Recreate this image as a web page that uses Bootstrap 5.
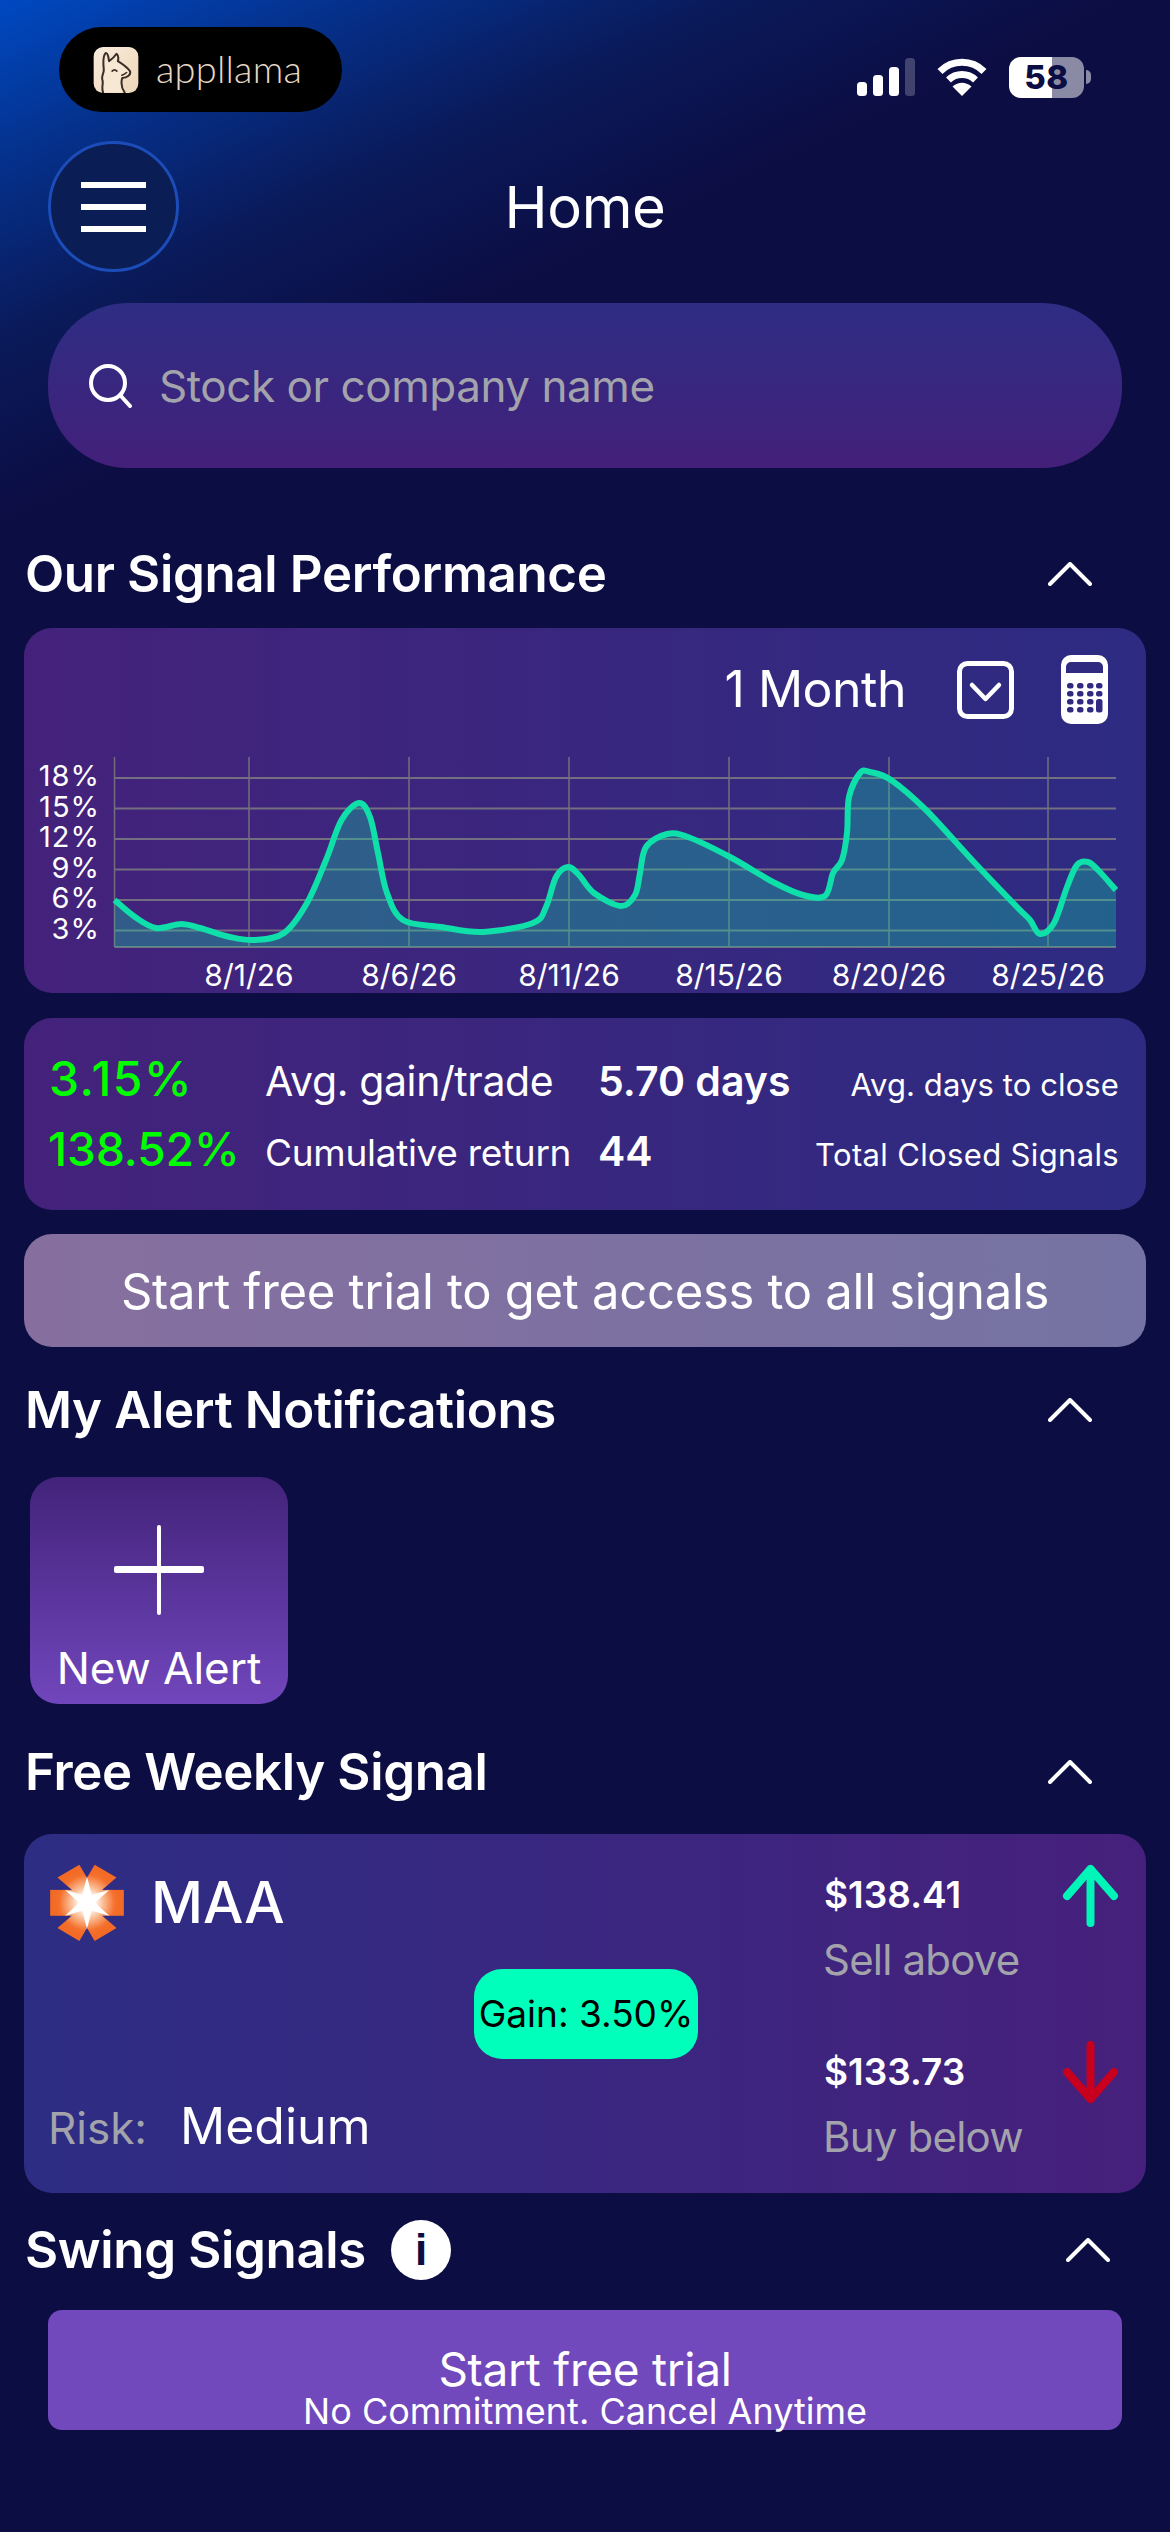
<!DOCTYPE html>
<html lang="en">
<head>
  <meta charset="UTF-8">
  <meta name="viewport" content="width=device-width, initial-scale=1.0">
  <title>Home</title>
  <link href="https://cdn.jsdelivr.net/npm/bootstrap@5.3.0/dist/css/bootstrap.min.css" rel="stylesheet">
  <style>
    body {
      margin: 0;
      min-height: 2532px;
      background: linear-gradient(155deg, #0049c2 0, #05308a 5.5%, #0a1a5a 11%, #0c0d43 17%);
      font-family: "Inter", "Liberation Sans", sans-serif;
      color: #fff;
    }

    .status-row { padding: 27px 79px 0 59px; }
    .brand-pill { width: 283px; height: 85px; background: #000; border-radius: 43px; padding-left: 34px; gap: 17px; }
    .brand-word { font-family: "Lato", sans-serif; font-weight: 300; font-size: 38px; line-height: 1; color: #e8d8c4; letter-spacing: .2px; margin-top: -4px; }
    .status-icons { margin-top: 15px; gap: 22px; }
    .battery-wrap { gap: 2px; }
    .battery-body { width: 75px; height: 41px; border-radius: 12px; color: #0c0d43; font-size: 33px; font-weight: 800; line-height: 41px; text-align: center; letter-spacing: .5px; }
    .battery-tip { width: 5px; height: 14px; background: #8b8aa5; border-radius: 0 7px 7px 0; }

    .top-bar { display: grid; grid-template-columns: 131px 1fr 131px; padding: 0 48px; margin-top: 29px; align-items: center; }
    .menu-btn { width: 131px; height: 131px; border-radius: 50%; background: #0a1e55; border: 3px solid #1b4cb8; gap: 16px; }
    .menu-btn i { display: block; width: 65px; height: 6px; background: #fff; }
    .page-title { font-size: 58px; font-weight: 400; line-height: 70px; margin: 0; letter-spacing: -.4px; }

    .search-box { height: 165px; margin: 31px 48px 0; padding-left: 41px; gap: 27px; border-radius: 80px; background: linear-gradient(180deg, #2e2d84, #43207a); }
    .search-hint { font-size: 44px; color: #a3a3ab; letter-spacing: -.45px; }

    .sec-head { height: 60px; padding: 0 78px 0 25px; }
    .head-perf { margin-top: 76px; }
    .head-alert { margin-top: 33px; }
    .head-free { margin-top: 38px; }
    .head-swing { margin-top: 27px; padding-right: 60px; }
    .sec-title { font-size: 51px; font-weight: 600; line-height: 60px; margin: 0; letter-spacing: -.35px; }

    .panel { margin: 0 24px; border: 0; border-radius: 28px; background: linear-gradient(90deg, #44227b, #2d2b82); color: #fff; }
    .chart-panel { height: 365px; margin-top: 24px; padding-top: 27px; }
    .range-row { height: 69px; padding-right: 38px; }
    .range-label { font-size: 50px; margin-right: 51px; letter-spacing: -.5px; }
    .range-caret { margin-right: 47px; }
    .chart-svg { display: block; margin-top: 26px; }
    .chart-svg text { font-family: "Inter", "Liberation Sans", sans-serif; font-size: 30px; fill: #fff; }
    .chart-svg .axis-y { font-size: 29px; letter-spacing: 1px; }

    .stat-panel { display: grid; grid-template-columns: 217px 333px 1fr; grid-auto-rows: 72px; height: 192px; margin-top: 25px; padding: 25px 27px 0 24px; align-items: baseline; }
    .stat-pct { font-size: 46px; font-weight: 500; color: #0f0; white-space: nowrap; }
    .stat-pct-lg { font-size: 48px; letter-spacing: 1.5px; margin-left: 1px; }
    .stat-name { font-size: 37px; letter-spacing: -.3px; white-space: nowrap; }
    .stat-name-lg { font-size: 41px; letter-spacing: -.4px; }
    .stat-val { font-size: 41px; font-weight: 600; }
    .stat-note { font-size: 31px; text-align: right; letter-spacing: .1px; white-space: nowrap; }
    .stat-note-wide { letter-spacing: .35px; }

    .trial-bar { height: 113px; margin-top: 24px; padding-top: 2px; background: linear-gradient(90deg, #866f9f, #7573a3); font-size: 49px; letter-spacing: -.3px; }

    .new-alert { width: 258px; height: 227px; margin: 37px 0 0 30px; border-radius: 28px; background: linear-gradient(180deg, #42237a, #7146bc); }
    .new-alert svg { margin-top: 48px; }
    .new-alert span { font-size: 44px; line-height: 50px; margin-top: 28px; }

    .signal-panel { display: grid; grid-template-columns: 450px 224px 1fr; height: 359px; margin-top: 32px; background: linear-gradient(90deg, #2d2d84, #46207c); }
    .signal-left { padding: 30px 0 35px 26px; }
    .ticker { font-size: 57px; font-weight: 500; line-height: 77px; gap: 27px; }
    .risk-line { font-size: 44px; line-height: 60px; color: #a3a3ab; gap: 33px; margin-left: -2px; }
    .risk-line b { font-weight: 400; font-size: 50px; color: #fff; }
    .gain-tag { height: 90px; background: #00ffbb; color: #000; border-radius: 28px; font-size: 37px; white-space: nowrap; }
    .signal-right { padding: 31px 27px 0 126px; gap: 52px; }
    .price-line { font-size: 37px; font-weight: 600; line-height: 60px; }
    .price-note { font-size: 42px; line-height: 60px; margin: 5px 0 0 -1px; color: #a3a3ab; letter-spacing: -.8px; }
    .signal-arrow { margin-top: -1px; }

    .info-dot { width: 60px; height: 60px; border-radius: 50%; background: #fff; color: #0c0d43; margin-left: 25px; font-family: "Liberation Sans", sans-serif; font-weight: 700; font-size: 44px; line-height: 60px; text-align: center; }
    .start-btn { display: flex; flex-direction: column; align-items: center; width: 1074px; height: 120px; margin: 30px 48px 0; padding: 36px 0 0; border: 0; border-radius: 14px; background: #7248bd; color: #fff; }
    .start-main { font-size: 46px; line-height: 46px; letter-spacing: -.3px; }
    .start-sub { font-size: 36px; line-height: 38px; }
  </style>
</head>
<body>

  <div class="status-row d-flex justify-content-between align-items-center">
    <div class="brand-pill d-flex align-items-center">
      <svg width="46" height="46" viewBox="0 0 133 137">
        <defs>
          <linearGradient id="iconBg" x1="0" y1="0" x2="1" y2="1"><stop offset="0" stop-color="#f9ecdc"/><stop offset="1" stop-color="#eed6b8"/></linearGradient>
        </defs>
        <rect width="133" height="137" rx="28" fill="url(#iconBg)"/>
        <path d="M28 135C22 120 30 110 26 98 22 85 32 78 30 65 28 45 28 25 36 18 44 18 44 35 46 42 52 38 60 32 68 20 74 25 74 35 72 42 85 50 100 60 108 72 112 82 100 92 85 92 80 110 85 125 92 135" fill="#f7e8d4" stroke="#3a2f27" stroke-width="6" stroke-linecap="round" stroke-linejoin="round"/>
        <path d="M55 72Q62 64 69 72M84 84Q92 82 98 76" fill="none" stroke="#3a2f27" stroke-width="5" stroke-linecap="round"/>
      </svg>
      <span class="brand-word">appllama</span>
    </div>
    <div class="status-icons d-flex align-items-center">
      <svg width="58" height="38" viewBox="0 0 58 38">
        <rect x="0" y="24" width="10" height="14" rx="3.5" fill="#fff"/>
        <rect x="16" y="17" width="10" height="21" rx="3.5" fill="#fff"/>
        <rect x="32" y="9" width="10" height="29" rx="3.5" fill="#fff"/>
        <rect x="48" y="0" width="10" height="38" rx="3.5" fill="#fff" fill-opacity=".22"/>
      </svg>
      <svg width="50" height="38" viewBox="0 0 50 38">
        <path d="M3 13.5A31 31 0 0 1 47 13.5M11.5 22A19.5 19.5 0 0 1 38.500 22" fill="none" stroke="#fff" stroke-width="7"/>
        <path d="M25 38 15.500 28.500Q25 21 34.500 28.500Z" fill="#fff"/>
      </svg>
      <div class="battery-wrap d-flex align-items-center">
        <div class="battery-body" style="background: linear-gradient(90deg, #fff 57.3%, #8b8aa5 57.3%)">58</div>
        <div class="battery-tip"></div>
      </div>
    </div>
  </div>

  <div class="top-bar">
    <button class="menu-btn d-flex flex-column justify-content-center align-items-center p-0" type="button" aria-label="Menu"><i></i><i></i><i></i></button>
    <h1 class="page-title text-center">Home</h1>
    <div></div>
  </div>

  <div class="search-box d-flex align-items-center">
    <svg width="43" height="44" viewBox="0 0 43 44" fill="none" stroke="#fff" stroke-width="4" stroke-linecap="round">
      <circle cx="19" cy="19" r="17"/><path d="M31 31 41 42"/>
    </svg>
    <span class="search-hint">Stock or company name</span>
  </div>

  <div class="sec-head head-perf d-flex justify-content-between align-items-center">
    <h2 class="sec-title">Our Signal Performance</h2>
    <svg width="44" height="24" viewBox="0 0 44 24" fill="none" stroke="#fff" stroke-width="4" stroke-linecap="round" stroke-linejoin="round"><path d="M2 22 22 2 42 22"/></svg>
  </div>

  <div class="panel chart-panel">
    <div class="range-row d-flex justify-content-end align-items-center">
      <span class="range-label">1 Month</span>
      <svg class="range-caret" width="57" height="58" viewBox="0 0 57 58" fill="none" stroke="#fff">
        <rect x="2.500" y="2.500" width="52" height="53" rx="8" stroke-width="5"/>
        <path d="M15 24 28.500 38 42 24" stroke-width="4.500" stroke-linecap="round" stroke-linejoin="round"/>
      </svg>
      <svg width="47" height="69" viewBox="0 0 47 69">
        <rect width="47" height="69" rx="10" fill="#fff"/>
        <path d="M5 18V12A5 5 0 0 1 10 7H37A5 5 0 0 1 42 12V18Z" fill="#302a80"/>
        <g fill="#302a80" id="calcKeys"></g>
        <rect x="35" y="44" width="6.500" height="13.500" rx="2.500" fill="#302a80"/>
      </svg>
    </div>
    <svg class="chart-svg" id="chart" width="1122" height="243" viewBox="24 750 1122 243"></svg>
  </div>

  <div class="panel stat-panel">
    <span class="stat-pct stat-pct-lg">3.15%</span>
    <span class="stat-name stat-name-lg">Avg. gain/trade</span>
    <div class="d-flex justify-content-between align-items-baseline">
      <span class="stat-val">5.70 days</span>
      <span class="stat-note">Avg. days to close</span>
    </div>
    <span class="stat-pct">138.52%</span>
    <span class="stat-name">Cumulative return</span>
    <div class="d-flex justify-content-between align-items-baseline">
      <span class="stat-val">44</span>
      <span class="stat-note stat-note-wide">Total Closed Signals</span>
    </div>
  </div>

  <div class="panel trial-bar d-flex justify-content-center align-items-center">Start free trial to get access to all signals</div>

  <div class="sec-head head-alert d-flex justify-content-between align-items-center">
    <h2 class="sec-title">My Alert Notifications</h2>
    <svg width="44" height="24" viewBox="0 0 44 24" fill="none" stroke="#fff" stroke-width="4" stroke-linecap="round" stroke-linejoin="round"><path d="M2 22 22 2 42 22"/></svg>
  </div>

  <div class="new-alert d-flex flex-column align-items-center">
    <svg width="90" height="90" viewBox="0 0 90 90" fill="#fff">
      <rect x="0" y="41" width="90" height="7" rx="2"/><rect x="43" y="0" width="4" height="90" rx="2"/>
    </svg>
    <span>New Alert</span>
  </div>

  <div class="sec-head head-free d-flex justify-content-between align-items-center">
    <h2 class="sec-title">Free Weekly Signal</h2>
    <svg width="44" height="24" viewBox="0 0 44 24" fill="none" stroke="#fff" stroke-width="4" stroke-linecap="round" stroke-linejoin="round"><path d="M2 22 22 2 42 22"/></svg>
  </div>

  <div class="panel signal-panel">
    <div class="signal-left d-flex flex-column justify-content-between">
      <div class="ticker d-flex align-items-center">
        <svg width="74" height="77" viewBox="60 72 222 232">
          <defs>
            <radialGradient id="maaGlow" gradientUnits="userSpaceOnUse" cx="171" cy="189" r="105">
              <stop offset=".2" stop-color="#fff"/><stop offset=".45" stop-color="#fbc29c"/><stop offset=".8" stop-color="#f4702c"/><stop offset="1" stop-color="#f26a24"/>
            </radialGradient>
          </defs>
          <g fill="url(#maaGlow)">
            <rect x="60" y="150" width="222" height="78"/>
            <path d="M82 113 148 74 170 112 171 189Z"/>
            <path d="M260 113 194 74 172 112 171 189Z"/>
            <path d="M82 265 148 304 170 266 171 189Z"/>
            <path d="M260 265 194 304 172 266 171 189Z"/>
          </g>
          <path d="M171 110 185 165 238 150 195 189 238 228 185 213 171 268 157 213 105 228 147 189 105 150 157 165Z" fill="#fff"/>
        </svg>
        <span>MAA</span>
      </div>
      <div class="risk-line d-flex align-items-baseline"><span>Risk:</span><b>Medium</b></div>
    </div>
    <div class="d-flex align-items-center">
      <div class="gain-tag w-100 d-flex justify-content-center align-items-center">Gain: 3.50%</div>
    </div>
    <div class="signal-right d-flex flex-column">
      <div class="d-flex justify-content-between align-items-start">
        <div>
          <div class="price-line">$138.41</div>
          <div class="price-note">Sell above</div>
        </div>
        <svg class="signal-arrow" width="57" height="63" viewBox="0 0 57 63" fill="none" stroke="#00f5b8" stroke-width="8" stroke-linecap="round" stroke-linejoin="round"><path d="M28.500 59V5M5 32 28.500 5 52 32"/></svg>
      </div>
      <div class="d-flex justify-content-between align-items-start">
        <div>
          <div class="price-line">$133.73</div>
          <div class="price-note">Buy below</div>
        </div>
        <svg class="signal-arrow" width="57" height="63" viewBox="0 0 57 63" fill="none" stroke="#c8001e" stroke-width="8" stroke-linecap="round" stroke-linejoin="round"><path d="M28.500 4V58M5 31 28.500 58 52 31"/></svg>
      </div>
    </div>
  </div>

  <div class="sec-head head-swing d-flex justify-content-between align-items-center">
    <div class="d-flex align-items-center">
      <h2 class="sec-title">Swing Signals</h2>
      <span class="info-dot">i</span>
    </div>
    <svg width="44" height="24" viewBox="0 0 44 24" fill="none" stroke="#fff" stroke-width="4" stroke-linecap="round" stroke-linejoin="round"><path d="M2 22 22 2 42 22"/></svg>
  </div>

  <button class="btn start-btn" type="button">
    <span class="start-main">Start free trial</span>
    <span class="start-sub">No Commitment. Cancel Anytime</span>
  </button>

  <script>
    // calculator keys, the tall key in the last column is drawn in the svg
    var keys = "";
    var keyX = [6, 16, 26, 35];
    for (var r = 0; r < 4; r++) {
      for (var c = 0; c < 4; c++) {
        if (c == 3 && r > 1) continue;
        keys += '<rect x="' + keyX[c] + '" y="' + (28 + r * 8) + '" width="6.500" height="5.500" rx="2.500"/>';
      }
    }
    document.getElementById("calcKeys").innerHTML = keys;

    // chart, points read off in page pixels
    var pts = [[114.5,900],[135,917],[156,928],[181,924],[200,928],[230,937],[255,940],[284,933],[307,903],[326,860],[341.5,820],[359,803],[370,817],[378,853],[387,893],[403,920],[441,927],[483,932],[533,923],[546,907],[556,877],[568,867],[579,875],[594,893],[621,906],[635,895],[640,873],[646,847],[667,834],[688,837],[730,857],[775,883],[803,895],[825,896],[833,873],[842,860],[847,833],[849,797],[860,773],[870,772],[891,780],[926,810],[972,860],[1017,907],[1030,920],[1040,934],[1054,923],[1067,887],[1077,865],[1088,862],[1098,870],[1116,890]];
    var d = "M" + pts[0][0] + " " + pts[0][1];
    for (var i = 0; i < pts.length - 1; i++) {
      var p0 = pts[i - 1] || pts[i], p1 = pts[i], p2 = pts[i + 1], p3 = pts[i + 2] || p2;
      d += "C" + (p1[0] + (p2[0] - p0[0]) / 6).toFixed(1) + " " + (p1[1] + (p2[1] - p0[1]) / 6).toFixed(1) + " " +
        (p2[0] - (p3[0] - p1[0]) / 6).toFixed(1) + " " + (p2[1] - (p3[1] - p1[1]) / 6).toFixed(1) + " " + p2[0] + " " + p2[1];
    }
    var html = "";
    var yLines = [[778,"18%"],[808.5,"15%"],[839,"12%"],[869.5,"9%"],[900,"6%"],[930.5,"3%"]];
    yLines.forEach(function (l) {
      html += '<line x1="114.500" x2="1116" y1="' + l[0] + '" y2="' + l[0] + '" stroke="#736f80" stroke-width="2"/>';
      html += '<text class="axis-y" x="100" y="' + (l[0] + 8) + '" text-anchor="end">' + l[1] + '</text>';
    });
    var xLines = [[249,"8/1/26"],[409,"8/6/26"],[569,"8/11/26"],[729,"8/15/26"],[889,"8/20/26"],[1048,"8/25/26"]];
    html += '<line x1="114.500" x2="114.500" y1="757" y2="947" stroke="#736f80" stroke-width="1.500"/>';
    html += '<line x1="114.500" x2="1116" y1="947" y2="947" stroke="#736f80" stroke-width="2"/>';
    xLines.forEach(function (l) {
      html += '<line x1="' + l[0] + '" x2="' + l[0] + '" y1="757" y2="947" stroke="#736f80" stroke-width="1.500"/>';
      html += '<text x="' + l[0] + '" y="986" text-anchor="middle">' + l[1] + '</text>';
    });
    html += '<path d="' + d + 'L1116 947L114.500 947Z" fill="#10d8a8" fill-opacity=".32"/>';
    html += '<path d="' + d + '" fill="none" stroke="#0fdfa8" stroke-width="6" stroke-linejoin="round"/>';
    document.getElementById("chart").innerHTML = html;
  </script>
  <script src="https://cdn.jsdelivr.net/npm/bootstrap@5.3.0/dist/js/bootstrap.bundle.min.js"></script>
</body>
</html>
